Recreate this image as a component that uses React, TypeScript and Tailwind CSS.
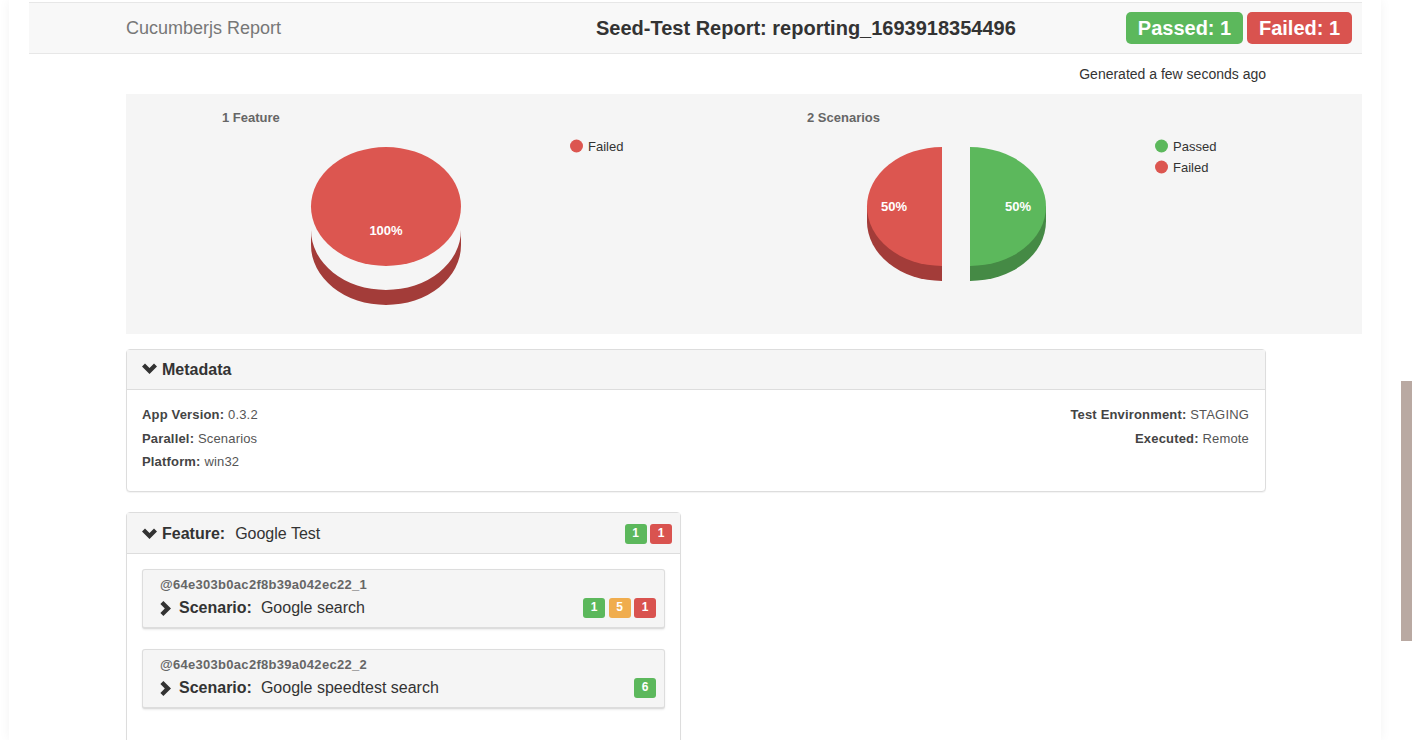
const ARIAL = 'font-["Liberation_Sans",Arial,sans-serif]'

const RED = '#dc5650'
const RED_DARK = '#a33c39'
const GREEN = '#5cb85c'
const GREEN_DARK = '#458a45'

// ─── Icons ────────────────────────────────────────────────────────────────────

function ChevronDownIcon() {
  return (
    <svg width="15" height="11" viewBox="0 0 15 11" className="shrink-0 -translate-y-px">
      <path d="M0 3.6 L3 0.6 L7.5 5 L12 0.6 L15 3.6 L7.5 11 Z" fill="#333" />
    </svg>
  )
}

function ChevronRightIcon() {
  return (
    <svg width="11" height="15" viewBox="0 0 11 15" className="shrink-0">
      <path d="M3.4 0 L0.4 3 L4.8 7.5 L0.4 12 L3.4 15 L11 7.5 Z" fill="#333" />
    </svg>
  )
}

// ─── Charts ───────────────────────────────────────────────────────────────────

function LegendItem({ y, color, label }: { y: number; color: string; label: string }) {
  return (
    <g>
      <circle cx="450.5" cy={y} r="6.5" fill={color} />
      <text x="462" y={y + 4.5} fontSize="13" fill="#333">{label}</text>
    </g>
  )
}

function FeatureChart() {
  return (
    <svg width="585" height="240" className="shrink-0" style={{ fontFamily: '"Liberation Sans", Arial, sans-serif' }}>
      <text x="96" y="27.5" fontSize="13" fontWeight="700" fill="#666">1 Feature</text>
      <path d="M185 136 L185 151 A75 60 0 0 0 335 151 L335 136 A75 60 0 0 1 185 136 Z" fill={RED_DARK} />
      <ellipse cx="260" cy="112.5" rx="75" ry="59.5" fill={RED} />
      <text x="260" y="140.5" fontSize="13" fontWeight="700" fill="#fff" textAnchor="middle">100%</text>
      <LegendItem y={52} color={RED} label="Failed" />
    </svg>
  )
}

function ScenarioChart() {
  return (
    <svg width="585" height="240" className="shrink-0" style={{ fontFamily: '"Liberation Sans", Arial, sans-serif' }}>
      <text x="96" y="27.5" fontSize="13" fontWeight="700" fill="#666">2 Scenarios</text>
      <path d="M156 112.5 L156 127.5 A75 59.5 0 0 0 231 187 L231 112.5 Z" fill={RED_DARK} />
      <path d="M156 112.5 A75 59.5 0 0 1 231 53 L231 172 A75 59.5 0 0 1 156 112.5 Z" fill={RED} />
      <path d="M335 112.5 L335 127.5 A76 59.5 0 0 1 259 187 L259 112.5 Z" fill={GREEN_DARK} />
      <path d="M335 112.5 A76 59.5 0 0 0 259 53 L259 172 A76 59.5 0 0 0 335 112.5 Z" fill={GREEN} />
      <text x="183" y="116.5" fontSize="13" fontWeight="700" fill="#fff" textAnchor="middle">50%</text>
      <text x="307" y="116.5" fontSize="13" fontWeight="700" fill="#fff" textAnchor="middle">50%</text>
      <LegendItem y={52} color={GREEN} label="Passed" />
      <LegendItem y={73} color={RED} label="Failed" />
    </svg>
  )
}

// ─── Bits ─────────────────────────────────────────────────────────────────────

function Count({ value, tone }: { value: number; tone: 'green' | 'amber' | 'red' }) {
  const bg = tone === 'green' ? 'bg-[#5cb85c]' : tone === 'amber' ? 'bg-[#f0ad4e]' : 'bg-[#d9534f]'
  return (
    <span className={`flex h-5 w-[22px] items-start justify-center rounded-[3px] pt-[2px] text-[12px] font-bold leading-[14px] text-white ${bg}`}>
      {value}
    </span>
  )
}

function MetaLine({ label, value }: { label: string; value: string }) {
  return (
    <p className="text-[13px] leading-[23.5px] tracking-[0.17px] text-[#555]">
      <b className="font-bold text-[#444]">{label}:</b> {value}
    </p>
  )
}

function ScenarioCard({ tag, name, counts }: {
  tag: string
  name: string
  counts: { value: number; tone: 'green' | 'amber' | 'red' }[]
}) {
  return (
    <div className="h-[60px] rounded-[3px] border border-[#ddd] border-b-[2px] bg-[#f5f5f5] pl-[17px] pr-2 shadow-[0_1px_2px_rgba(0,0,0,0.08)]">
      <p className="pt-[7px] text-[13px] font-bold leading-4 tracking-[0.29px] text-[#666]">{tag}</p>
      <div className="mt-[5px] flex items-center">
        <ChevronRightIcon />
        <b className="ml-2 text-[16px] font-bold leading-5 text-[#333]">Scenario:</b>
        <span className="ml-[9px] text-[16px] leading-5 text-[#333]">{name}</span>
        <div className="ml-auto flex gap-[3.5px]">
          {counts.map((c, i) => <Count key={i} value={c.value} tone={c.tone} />)}
        </div>
      </div>
    </div>
  )
}

// ─── Page ─────────────────────────────────────────────────────────────────────

export default function App() {
  return (
    <div className={`relative h-[740px] overflow-hidden bg-white ${ARIAL}`}>
      <main className="mx-[9px] h-full w-[1372px] bg-white pl-5 pr-[19px] pt-[2px] shadow-[0_0_11px_rgba(0,0,0,0.05)]">
        {/* ── Navbar ── */}
        <header className="flex h-[52px] items-center border-y border-[#e7e7e7] bg-[#f8f8f8] pl-[97px] pr-[10px]">
          <span className="w-[470px] text-[18px] leading-5 text-[#777]">Cucumberjs Report</span>
          <h1 className="text-[20px] font-bold leading-6 text-[#333]">Seed-Test Report: reporting_1693918354496</h1>
          <div className="ml-auto flex gap-1">
            <span className="flex h-8 w-[117px] items-center justify-center rounded-[5px] bg-[#5cb85c] text-[20px] font-bold text-white">Passed: 1</span>
            <span className="flex h-8 w-[105px] items-center justify-center rounded-[5px] bg-[#d9534f] text-[20px] font-bold text-white">Failed: 1</span>
          </div>
        </header>

        <div className="pl-[97px]">
          <p className="w-[1140px] pt-3 text-right text-[14px] leading-[17px] text-[#333]">Generated a few seconds ago</p>

          {/* ── Charts ── */}
          <section className="mt-[11px] flex h-[240px] bg-[#f5f5f5]">
            <FeatureChart />
            <ScenarioChart />
          </section>

          {/* ── Metadata ── */}
          <section className="mt-[15px] h-[143px] w-[1140px] rounded-[4px] border border-[#ddd] bg-white shadow-[0_1px_1px_rgba(0,0,0,0.05)]">
            <div className="flex h-10 items-center gap-[5px] border-b border-[#ddd] bg-[#f5f5f5] pl-[15px]">
              <ChevronDownIcon />
              <b className="text-[16px] font-bold text-[#333]">Metadata</b>
            </div>
            <div className="flex justify-between pl-[15px] pr-4 pt-[13px]">
              <div>
                <MetaLine label="App Version" value="0.3.2" />
                <MetaLine label="Parallel" value="Scenarios" />
                <MetaLine label="Platform" value="win32" />
              </div>
              <div className="text-right">
                <MetaLine label="Test Environment" value="STAGING" />
                <MetaLine label="Executed" value="Remote" />
              </div>
            </div>
          </section>

          {/* ── Feature ── */}
          <section className="mt-5 h-[300px] w-[555px] rounded-[4px] border border-[#ddd] bg-white shadow-[0_1px_1px_rgba(0,0,0,0.05)]">
            <div className="flex h-[41px] items-center border-b border-[#ddd] bg-[#f5f5f5] pl-[15px] pr-2 pt-[2px]">
              <ChevronDownIcon />
              <b className="ml-[5px] text-[16px] font-bold text-[#333]">Feature:</b>
              <span className="ml-[10px] text-[16px] text-[#333]">Google Test</span>
              <div className="ml-auto flex gap-[3.5px]">
                <Count value={1} tone="green" />
                <Count value={1} tone="red" />
              </div>
            </div>
            <div className="flex flex-col gap-5 px-[15px] pt-[15px]">
              <ScenarioCard
                tag="@64e303b0ac2f8b39a042ec22_1"
                name="Google search"
                counts={[{ value: 1, tone: 'green' }, { value: 5, tone: 'amber' }, { value: 1, tone: 'red' }]}
              />
              <ScenarioCard
                tag="@64e303b0ac2f8b39a042ec22_2"
                name="Google speedtest search"
                counts={[{ value: 6, tone: 'green' }]}
              />
            </div>
          </section>
        </div>
      </main>

      {/* scrollbar thumb */}
      <div className="absolute left-[1401px] top-[381px] h-[260px] w-[11px] bg-[#b9a9a2]" />
    </div>
  )
}
